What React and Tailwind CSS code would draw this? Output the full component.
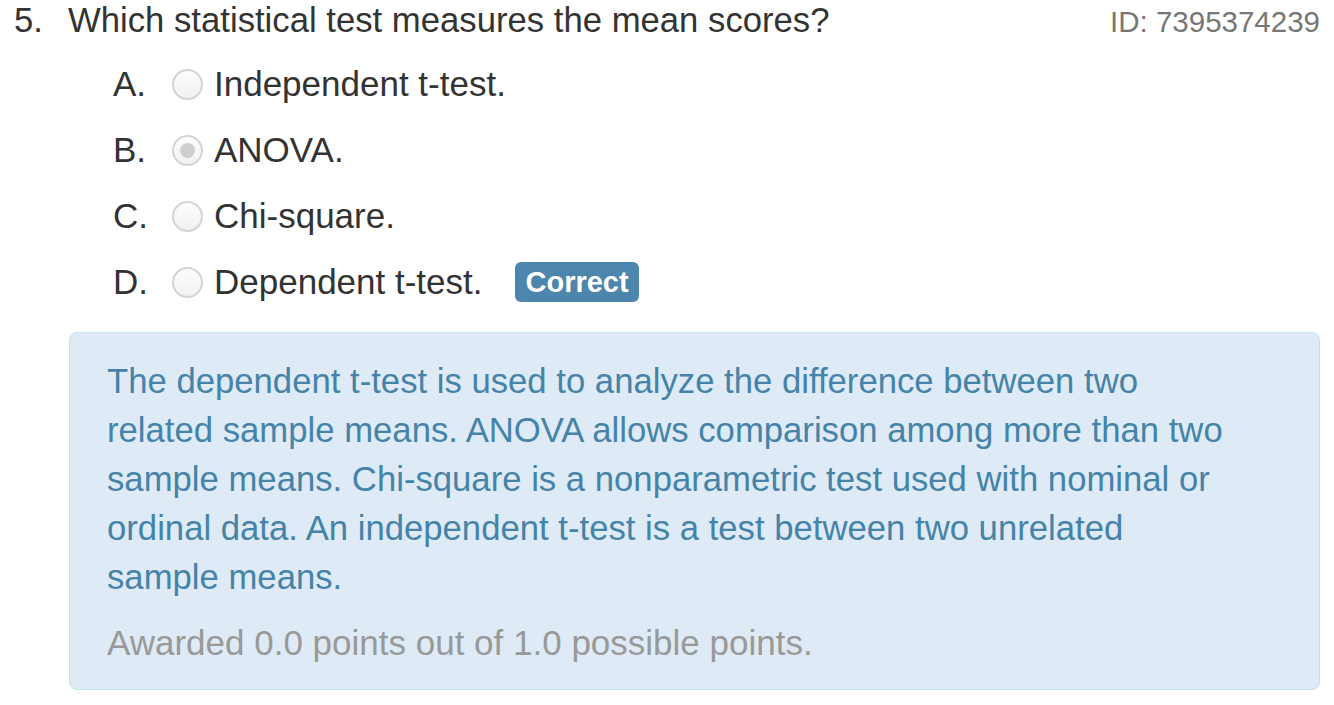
const options = [
  { letter: 'A.', text: 'Independent t-test.' },
  { letter: 'B.', text: 'ANOVA.', selected: true },
  { letter: 'C.', text: 'Chi-square.' },
  { letter: 'D.', text: 'Dependent t-test.', correct: true },
]

function Radio({ selected }) {
  return (
    <span className="inline-flex items-center justify-center w-[31px] h-[31px] rounded-full border-2 border-[#d4d4d4] bg-gradient-to-b from-[#fdfdfd] to-[#f1f1f1] shrink-0">
      {selected && <span className="w-[15px] h-[15px] rounded-full bg-[#cfcfcf]" />}
    </span>
  )
}

export default function App() {
  return (
    <div className="w-[1334px] h-[705px] bg-white px-[14px] text-[#333] font-['Liberation_Sans',Arial,sans-serif] overflow-hidden">
      <div className="flex justify-between items-baseline">
        <div className="flex text-[34.7px] leading-[40px]">
          <span className="w-[54px]">5.</span>
          <span>Which statistical test measures the mean scores?</span>
        </div>
        <div className="text-[29.5px] text-[#777]">ID: 7395374239</div>
      </div>

      <div className="flex flex-col pl-[99px] mt-[19px] gap-[24px]">
        {options.map((o) => (
          <div key={o.letter} className="flex items-center h-[42px] text-[35px] leading-[42px]">
            <span className="w-[59px]">{o.letter}</span>
            <Radio selected={o.selected} />
            <span className="ml-[11px]">{o.text}</span>
            {o.correct && (
              <span className="ml-[32px] pl-[11px] pr-[10px] h-[40px] inline-flex items-center rounded-[6px] bg-[#4c86ad] text-white font-bold text-[29px] leading-none">
                Correct
              </span>
            )}
          </div>
        ))}
      </div>

      <div className="ml-[55px] mt-[29px] rounded-[8px] border border-[#c2e2ee] bg-[#deebf6] pl-[37px] pr-[76px] pt-[24px] pb-[22px]">
        <p className="text-[34.7px] leading-[49px] text-[#4583a8]">
          The dependent t-test is used to analyze the difference between two related sample means. ANOVA allows comparison among more than two sample means. Chi-square is a nonparametric test used with nominal or ordinal data. An independent t-test is a test between two unrelated sample means.
        </p>
        <p className="mt-[16px] text-[35px] leading-[49px] text-[#999]">
          Awarded 0.0 points out of 1.0 possible points.
        </p>
      </div>
    </div>
  )
}
